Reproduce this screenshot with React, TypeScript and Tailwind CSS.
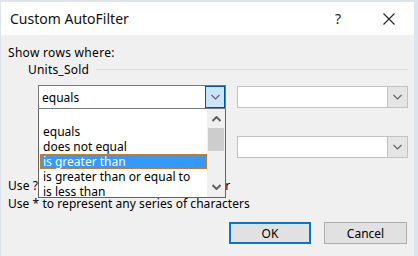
import React from "react";

const Chevron = ({ up = false, color = "#606060" }: { up?: boolean; color?: string }) => (
  <svg width="9" height="6" viewBox="0 0 9 6">
    <path
      d={up ? "M0.5 5 L4.5 1 L8.5 5" : "M0.5 1 L4.5 5 L8.5 1"}
      fill="none"
      stroke={color}
      strokeWidth="1.1"
    />
  </svg>
);

const ThickChevron = ({ up = false }: { up?: boolean }) => (
  <svg width="9" height="6" viewBox="0 0 9 6">
    <path
      d={up ? "M0.5 5 L4.5 1 L8.5 5" : "M0.5 1 L4.5 5 L8.5 1"}
      fill="none"
      stroke="#606060"
      strokeWidth="2"
    />
  </svg>
);

const items = [
  "equals",
  "does not equal",
  "is greater than",
  "is greater than or equal to",
  "is less than",
];

export default function App() {
  return (
    <div
      className="w-[418px] h-[256px] bg-[#dde4ec] overflow-hidden text-[12px] text-black"
      style={{ fontFamily: '"Noto Sans", "Liberation Sans", sans-serif' }}
    >
      <div className="ml-[1px] mt-[2px] w-[413px] h-[254px] bg-[#f0f0f0] flex flex-col">
        {/* title bar */}
        <div className="h-[33px] bg-white flex items-center pl-[9px] shrink-0">
          <span className="text-[14px] leading-[16px] text-[#111]">Custom AutoFilter</span>
          <span className="ml-auto mr-[42px] text-[14px] leading-[16px] text-[#222]">?</span>
          <svg width="12" height="12" viewBox="0 0 12 12" className="mr-[19px]">
            <path d="M0.5 0.5 L11.5 11.5 M11.5 0.5 L0.5 11.5" stroke="#222" strokeWidth="1.1" />
          </svg>
        </div>

        {/* content */}
        <div className="flex flex-col pl-[7px] pr-[6px]">
          <div className="mt-[10px] leading-[15px] tracking-[0.3px]">Show rows where:</div>
          <div className="mt-[2px] flex items-center pl-[20px] leading-[15px]">
            <span className="tracking-[0.2px]">Units_Sold</span>
            <div className="ml-[7px] flex-1 h-px bg-[#dcdcdc]" />
          </div>

          {/* row 1 */}
          <div className="mt-[8px] flex items-center pl-[30px] gap-[11px]">
            <div className="relative w-[188px] h-[24px] bg-white border border-[#7a7a7a] flex items-center">
              <span className="pl-[3px] leading-[15px]">equals</span>
              <div className="ml-auto h-full w-[20px] bg-[#cce4f7] border border-[#005499] flex items-center justify-center">
                <Chevron />
              </div>
              {/* dropdown list */}
              <div className="absolute left-[-1px] top-[23px] w-[188px] h-[89px] bg-white border border-[#646464] border-t-0 overflow-hidden z-10 flex">
                <div className="flex-1 flex flex-col pl-[1px] pt-[15px]">
                  {items.map((t, i) =>
                    t === "is greater than" ? (
                      <div
                        key={i}
                        className="h-[15px] shrink-0 leading-[13px] bg-[#3399ff] text-white pl-[2px] border border-dotted border-[#c9822b]"
                      >
                        {t}
                      </div>
                    ) : (
                      <div key={i} className="h-[15px] shrink-0 leading-[15px] pl-[3px] whitespace-nowrap">
                        {t}
                      </div>
                    )
                  )}
                </div>
                <div className="w-[18px] h-full bg-[#f0f0f0] flex flex-col items-center">
                  <div className="h-[19px] flex items-center justify-center">
                    <ThickChevron up />
                  </div>
                  <div className="w-[16px] h-[23px] bg-[#cdcdcd]" />
                  <div className="flex-1" />
                  <div className="h-[20px] flex items-center justify-center">
                    <ThickChevron />
                  </div>
                </div>
              </div>
            </div>
            <div className="w-[171px] h-[22px] bg-white border border-[#c2c2c2] flex items-center">
              <div className="ml-auto h-full w-[20px] bg-[#e5e5e5] border-l border-[#c2c2c2] flex items-center justify-center">
                <Chevron />
              </div>
            </div>
          </div>

          {/* row 2 */}
          <div className="mt-[27px] flex items-center pl-[30px] gap-[11px]">
            <div className="w-[188px] h-[22px] bg-white border border-[#c2c2c2]" />
            <div className="w-[171px] h-[22px] bg-white border border-[#c2c2c2] flex items-center">
              <div className="ml-auto h-full w-[20px] bg-[#e5e5e5] border-l border-[#c2c2c2] flex items-center justify-center">
                <Chevron />
              </div>
            </div>
          </div>

          <div className="mt-[20px] leading-[15px] whitespace-nowrap tracking-[0.1px]">Use ? to represent any single character</div>
          <div className="mt-[3px] leading-[15px] whitespace-nowrap tracking-[0.05px]">Use * to represent any series of characters</div>

          {/* buttons */}
          <div className="mt-[11px] flex justify-end gap-[13px] pr-[1px]">
            <button className="w-[82px] h-[22px] bg-[#e1e1e1] border-2 border-[#0078d7] leading-[15px]">OK</button>
            <button className="w-[83px] h-[22px] bg-[#e1e1e1] border border-[#adadad] leading-[15px]">Cancel</button>
          </div>
        </div>
      </div>
    </div>
  );
}
